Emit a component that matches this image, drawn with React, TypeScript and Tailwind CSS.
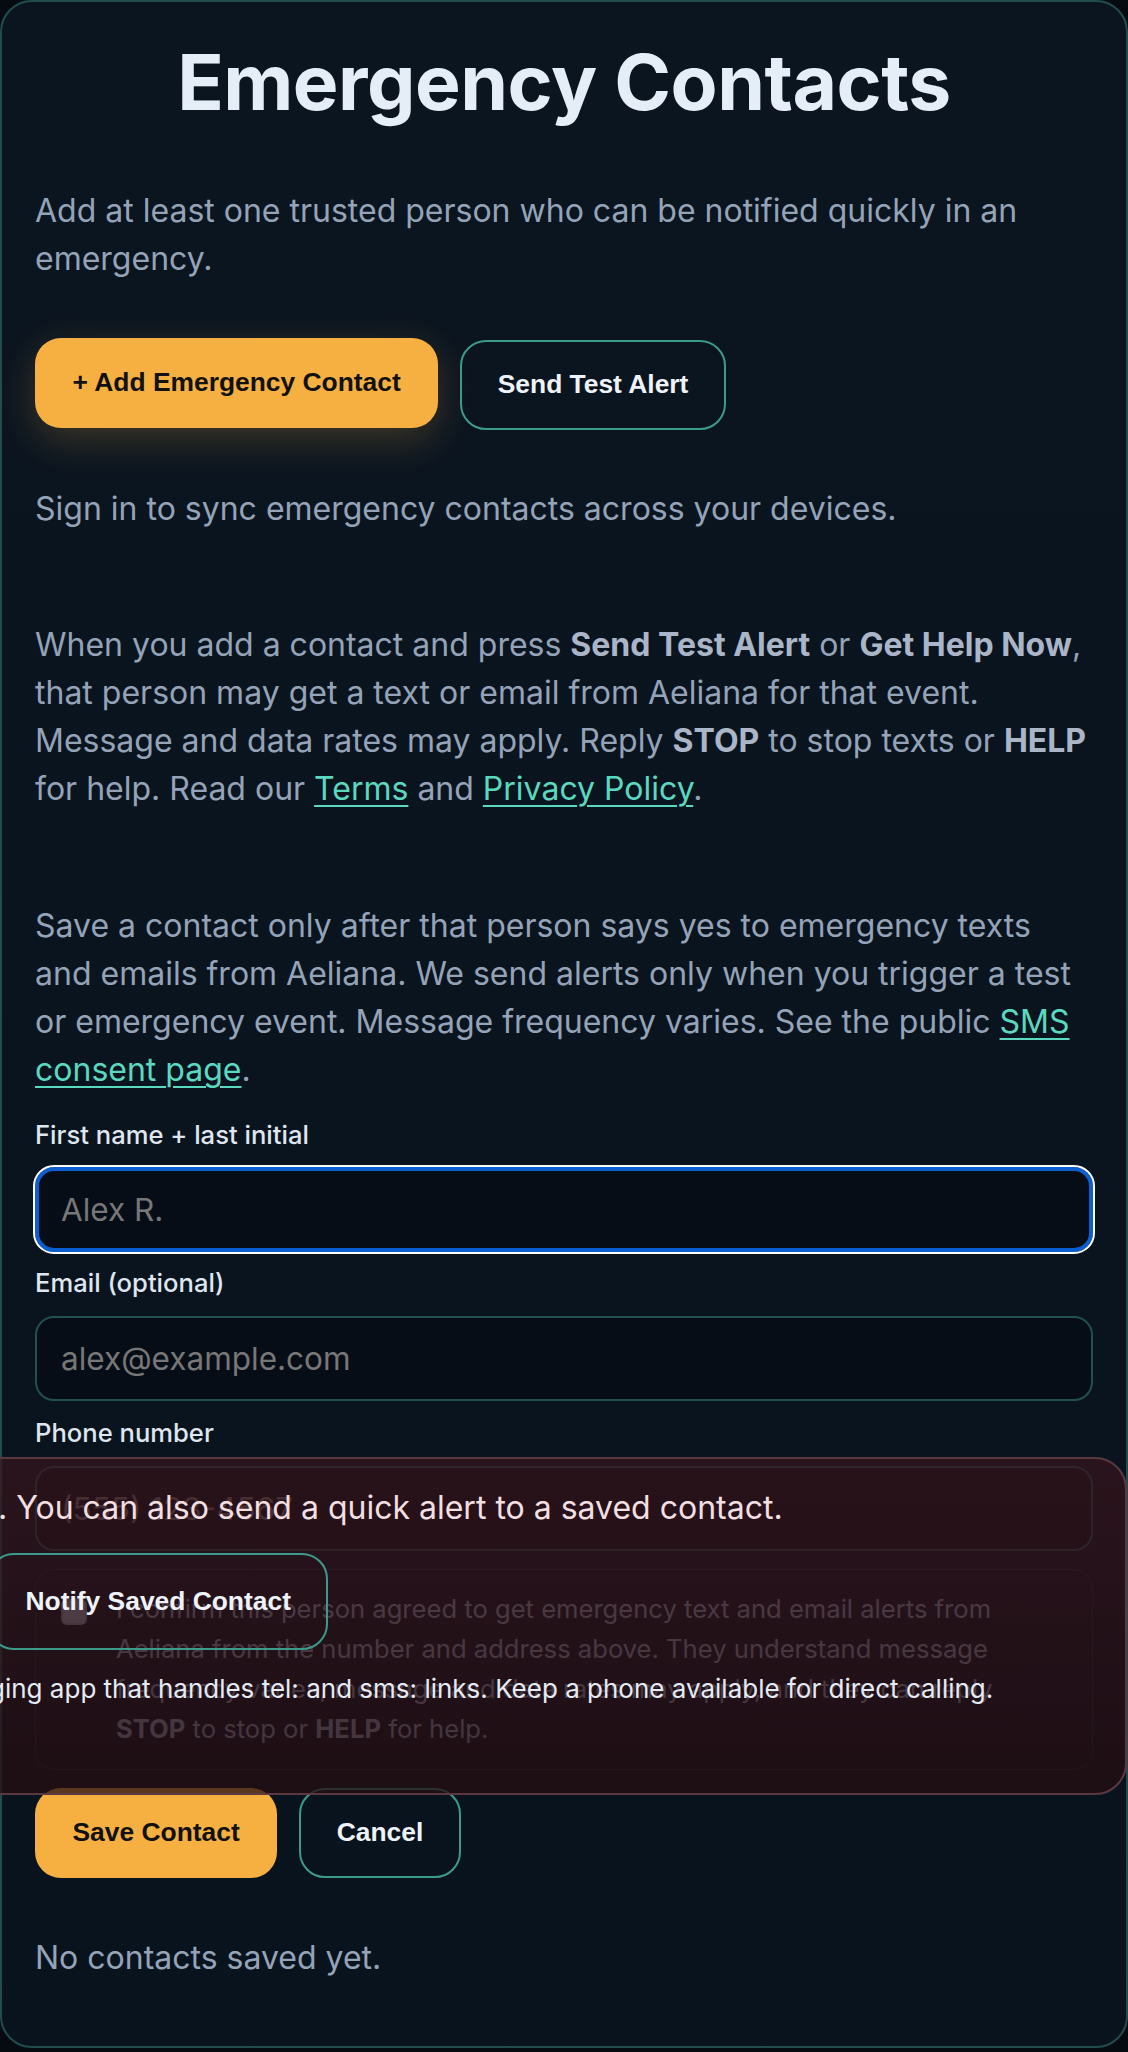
import React from "react"

const sans = { fontFamily: "Inter, 'Noto Sans', sans-serif" }
const btnFont = { fontFamily: "'Liberation Sans', Arial, sans-serif" }

const Field = ({ label, placeholder, focused, top }: { label: string; placeholder: string; focused?: boolean; top: string }) => {
  return (
    <div className={top}>
      <label className="block text-[25.6px] leading-[38.4px] font-medium text-[#dfe6ef]">{label}</label>
      <input
        readOnly
        placeholder={placeholder}
        style={sans}
        className={
          "mt-[13px] block w-full h-[85px] rounded-[19px] bg-[#070d17] text-[31.5px] text-[#e2e8f0] placeholder:text-[#777777] focus:outline-none " +
          (focused
            ? "border-[4px] border-[#0b5fd0] outline-2 outline-white px-[22px]"
            : "border-2 border-[#21504e] px-[24px]")
        }
      />
    </div>
  )
}

export default function App() {
  return (
    <div className="min-h-screen bg-[#060b11]" style={sans}>
      <div className="relative rounded-[32px] border-2 border-[#234c4c] bg-linear-to-b from-[#0b1520] to-[#09131e] px-[33px] pt-[35px] pb-[64px]">
        <h1 className="text-center text-[76.8px] leading-[92px] font-bold tracking-[-0.5px] text-[#e5edf7]">
          Emergency Contacts
        </h1>

        <p className="mt-[58px] text-[32px] leading-[48px] text-[#94a3b8]">
          Add at least one trusted person who can be notified quickly in an emergency.
        </p>

        <div className="mt-[57px] flex gap-[22px]" style={btnFont}>
          <button className="h-[90px] -translate-y-[2px] rounded-[26px] border-2 border-transparent bg-[#f6b042] px-[35.5px] text-[26.4px] font-bold text-[#111111] shadow-[0_12px_40px_rgba(247,178,67,0.22)]">
            + Add Emergency Contact
          </button>
          <button className="h-[90px] rounded-[26px] border-2 border-[#3c9a8b] px-[35.5px] text-[26.4px] font-bold text-[#eef3f9]">
            Send Test Alert
          </button>
        </div>

        <p className="mt-[55px] text-[32px] leading-[48px] text-[#94a3b8]">
          Sign in to sync emergency contacts across your devices.
        </p>

        <p className="mt-[88px] text-[32px] leading-[48px] text-[#94a3b8]">
          When you add a contact and press <b className="font-bold text-[#aab6c7]">Send Test Alert</b> or{" "}
          <b className="font-bold text-[#aab6c7]">Get Help Now</b>, that person may get a text or email from Aeliana for
          that event. Message and data rates may apply. Reply <b className="font-bold text-[#aab6c7]">STOP</b> to stop texts or{" "}
          <b className="font-bold text-[#aab6c7]">HELP</b> for help. Read our{" "}
          <a className="text-[#5bd8c0] underline decoration-2 underline-offset-[5px]">Terms</a> and{" "}
          <a className="text-[#5bd8c0] underline decoration-2 underline-offset-[5px]">Privacy Policy</a>.
        </p>

        <p className="mt-[89px] text-[32px] leading-[48px] text-[#94a3b8]">
          Save a contact only after that person says yes to emergency texts and emails from Aeliana. We send alerts only
          when you trigger a test or emergency event. Message frequency varies. See the public{" "}
          <a className="text-[#5bd8c0] underline decoration-2 underline-offset-[5px]">SMS consent page</a>.
        </p>

        <Field top="mt-[21.5px]" label="First name + last initial" placeholder="Alex R." focused />
        <Field top="mt-[12.5px]" label="Email (optional)" placeholder="alex@example.com" />
        <Field top="mt-[13.5px]" label="Phone number" placeholder="(555) 123-4567" />

        <div className="mt-[18.5px] flex gap-[29px] rounded-[19px] border-[1.6px] border-[#1e2a36] bg-[#0a131e] px-[25px] py-[19.2px]">
          <input
            type="checkbox"
            className="mt-[10px] h-[26px] w-[26px] shrink-0 appearance-none rounded-[6px] border-2 border-[#8a95a6] bg-[#a3adbb]"
          />
          <p className="text-[25.6px] leading-[40px] text-[#94a3b8]">
            I confirm this person agreed to get emergency text and email alerts from Aeliana from the number and address
            above. They understand message frequency varies, message and data rates may apply, and they can reply{" "}
            <b className="font-bold">STOP</b> to stop or <b className="font-bold">HELP</b> for help.
          </p>
        </div>

        <div className="mt-[18px] flex gap-[22px]" style={btnFont}>
          <button className="h-[90px] rounded-[26px] border-2 border-transparent bg-[#f6b042] px-[35.5px] text-[26.4px] font-bold text-[#111111]">
            Save Contact
          </button>
          <button className="h-[90px] rounded-[26px] border-2 border-[#3c9a8b] px-[35.5px] text-[26.4px] font-bold text-[#eef3f9]">
            Cancel
          </button>
        </div>

        <p className="mt-[56px] text-[32px] leading-[48px] text-[#94a3b8]">No contacts saved yet.</p>

        {/* help sheet sliding in over the form */}
        <div className="absolute top-[1455px] left-[-600px] right-[-1px] h-[338px] rounded-[32px] border-2 border-[#5a3940] bg-linear-to-b from-[rgba(54,20,28,0.72)] to-[rgba(36,13,17,0.74)] pl-[596px] pt-[25.4px]">
          <p className="relative -ml-[2px] whitespace-nowrap text-[32px] leading-[48px] text-[#f2dfe0]">
            <span className="absolute right-full whitespace-nowrap">Get Help Now texts the contacts you choose</span>. You can
            also send a quick alert to a saved contact.
          </p>
          <button
            style={btnFont}
            className="mt-[21px] -ml-[12px] h-[97px] rounded-[26px] border-2 border-[#3c9a8b] px-[35.5px] text-[26.4px] font-bold text-[#eef3f9]"
          >
            Notify Saved Contact
          </button>
          <p className="relative mt-[19.5px] -ml-[11px] whitespace-nowrap text-[26px] leading-[38.4px] text-[#e4ebf4]">
            <span className="absolute right-full whitespace-nowrap">Calling and texting open your phone or messa</span>ging
            app that handles tel: and sms: links. Keep a phone available for direct calling.
          </p>
        </div>
      </div>
    </div>
  )
}
